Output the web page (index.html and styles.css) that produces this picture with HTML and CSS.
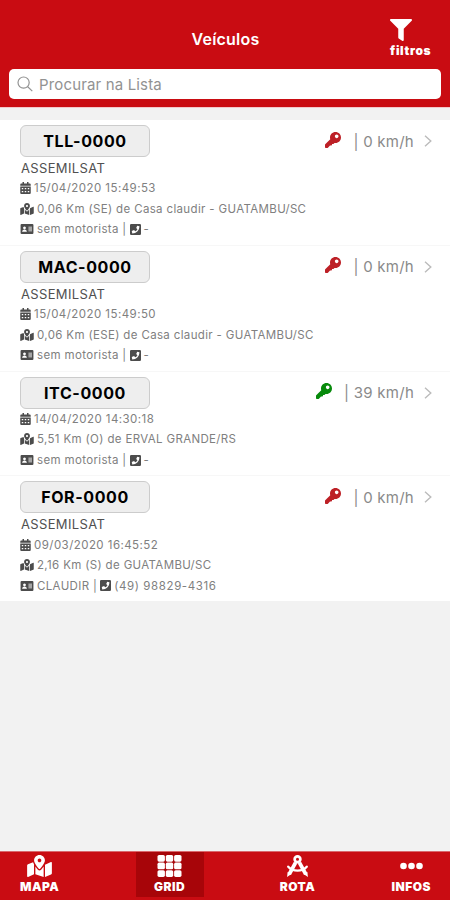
FILE: index.html
```html
<!DOCTYPE html>
<html lang="pt-br">
<head>
	<meta charset="UTF-8">
	<title>Veículos</title>
	<link rel="stylesheet" href="styles.css">
</head>
<body>
	<!-- icons -->
	<svg class="sprite" width="0" height="0">
		<symbol id="filter" viewBox="0 0 512 512"><path d="M487.976 0H24.028C2.71 0-8.047 25.866 7.058 40.971L192 225.941V432c0 7.831 3.821 15.17 10.237 19.662l80 55.98C298.02 518.69 320 507.493 320 487.98V225.941l184.947-184.97C520.021 25.896 509.338 0 487.976 0z"/></symbol>
		<symbol id="key" viewBox="0 0 512 512"><path d="M512 176.001C512 273.203 433.202 352 336 352c-11.22 0-22.19-1.062-32.827-3.069l-24.012 27.014A23.999 23.999 0 0 1 261.223 384H224v20c0 13.255-10.745 24-24 24h-40l-52 60c-8 10-16 24-30 24H24c-13.255 0-24-10.745-24-24v-78.059c0-6.365 2.529-12.47 7.029-16.971l161.802-161.802C163.108 213.814 160 195.271 160 176 160 78.798 238.797.001 335.999 0 433.488-.001 512 78.511 512 176.001zM316 138c0 32 26 58 58 58s58-26 58-58-26-58-58-58-58 26-58 58z"/></symbol>
		<symbol id="map" viewBox="0 0 576 512"><path d="M288 0c-69.59 0-126 56.41-126 126 0 56.26 82.35 158.8 113.9 196.02 6.39 7.54 17.82 7.54 24.2 0C331.65 284.8 414 182.26 414 126 414 56.41 357.59 0 288 0zm0 168c-23.2 0-42-18.8-42-42s18.8-42 42-42 42 18.8 42 42-18.8 42-42 42zM20.12 215.95A32.006 32.006 0 0 0 0 245.66v250.32c0 11.32 11.43 19.06 21.94 14.86L160 448V214.92c-8.84-15.98-16.07-31.54-21.25-46.42L20.12 215.95zM288 359.67c-14.07 0-27.38-6.18-36.51-16.96-19.66-23.2-40.57-49.62-59.49-76.72v182l192 64V266c-18.92 27.09-39.82 53.52-59.49 76.72-9.13 10.77-22.44 16.95-36.51 16.95zm266.06-198.51L416 224v288l139.88-55.95A31.996 31.996 0 0 0 576 426.34V176.02c0-11.32-11.43-19.06-21.94-14.86z"/></symbol>
		<symbol id="calendar" viewBox="0 0 448 512"><path fill-rule="evenodd" d="M0 192v272a48 48 0 0 0 48 48h352a48 48 0 0 0 48-48V192zM64 256h64v56H64zM192 256h64v56h-64zM320 256h64v56h-64zM64 384h64v56H64zM192 384h64v56h-64zM320 384h64v56h-64zM448 160v-48a48 48 0 0 0-48-48h-48V0h-64v64H160V0H96v64H48a48 48 0 0 0-48 48v48z"/></symbol>
		<symbol id="card" viewBox="0 0 576 448"><path fill-rule="evenodd" d="M48 0h480a48 48 0 0 1 48 48v352a48 48 0 0 1-48 48H48a48 48 0 0 1-48-48V48A48 48 0 0 1 48 0zM176 110a64 64 0 1 0 .1 0zM70 350h212c0-62-38-108-106-108S70 288 70 350zM352 120h160v40H352zM352 205h160v40H352zM352 290h160v40H352z"/></symbol>
		<symbol id="phone" viewBox="0 0 448 448"><path fill-rule="evenodd" d="M400 0H48A48 48 0 0 0 0 48v352a48 48 0 0 0 48 48h352a48 48 0 0 0 48-48V48a48 48 0 0 0-48-48zM94 384l-22-94 94-42 44 52c48-24 76-56 94-90l-52-44 42-98 90 24c0 170-130 292-290 292z"/></symbol>
		<symbol id="grid" viewBox="0 0 24 22">
			<rect x="0" y="0" width="7.4" height="6.7" rx="1.6"/><rect x="8.3" y="0" width="7.4" height="6.7" rx="1.6"/><rect x="16.6" y="0" width="7.4" height="6.7" rx="1.6"/>
			<rect x="0" y="7.6" width="7.4" height="6.7" rx="1.6"/><rect x="8.3" y="7.6" width="7.4" height="6.7" rx="1.6"/><rect x="16.6" y="7.6" width="7.4" height="6.7" rx="1.6"/>
			<rect x="0" y="15.2" width="7.4" height="6.7" rx="1.6"/><rect x="8.3" y="15.2" width="7.4" height="6.7" rx="1.6"/><rect x="16.6" y="15.2" width="7.4" height="6.7" rx="1.6"/>
		</symbol>
		<symbol id="compass" viewBox="0 0 24 23"><g fill="none" stroke="currentColor"><circle cx="12" cy="4.5" r="3" stroke-width="2.8"/><path stroke-width="4" d="M10 8L3.4 20M14 8l6.6 12"/><path stroke-width="2.4" stroke-linecap="round" d="M2.3 12.2c5 5.5 14.4 5.5 19.4 0"/></g><path d="M1.7 17.7l4 2.2-4.6 3zM22.3 17.7l-4 2.2 4.6 3z"/></symbol>
		<symbol id="dots" viewBox="0 0 24 22"><circle cx="4" cy="11" r="3.3"/><circle cx="12" cy="11" r="3.3"/><circle cx="20" cy="11" r="3.3"/></symbol>
		<symbol id="arrow" viewBox="0 0 8 12"><path fill="none" stroke="currentColor" stroke-width="1.4" d="M1 .8L6.8 6 1 11.2"/></symbol>
	</svg>

	<div class="app">
		<div class="header">
			<div class="topbar">
				<h1>Veículos</h1>
				<div class="filtros">
					<svg><use href="#filter"/></svg>
					<span>filtros</span>
				</div>
			</div>
			<div class="search">
				<svg viewBox="0 0 16 16"><circle cx="6.6" cy="6.6" r="5.6"/><path d="M10.7 10.7l4.6 4.4"/></svg>
				<span>Procurar na Lista</span>
			</div>
		</div>

		<div class="list">
			<div class="item">
				<div class="row">
					<div class="placa">TLL-0000</div>
					<svg class="key off"><use href="#key"/></svg>
					<span class="speed">| 0 km/h</span>
					<svg class="arrow"><use href="#arrow"/></svg>
				</div>
				<div class="name">ASSEMILSAT</div>
				<div class="line"><svg class="cal"><use href="#calendar"/></svg><span class="date">15/04/2020 15:49:53</span></div>
				<div class="line"><svg class="map"><use href="#map"/></svg><span>0,06 Km (SE) de Casa claudir - GUATAMBU/SC</span></div>
				<div class="line"><svg class="card"><use href="#card"/></svg><span>sem motorista |</span><svg class="phone"><use href="#phone"/></svg><span>-</span></div>
			</div>

			<div class="item">
				<div class="row">
					<div class="placa">MAC-0000</div>
					<svg class="key off"><use href="#key"/></svg>
					<span class="speed">| 0 km/h</span>
					<svg class="arrow"><use href="#arrow"/></svg>
				</div>
				<div class="name">ASSEMILSAT</div>
				<div class="line"><svg class="cal"><use href="#calendar"/></svg><span class="date">15/04/2020 15:49:50</span></div>
				<div class="line"><svg class="map"><use href="#map"/></svg><span>0,06 Km (ESE) de Casa claudir - GUATAMBU/SC</span></div>
				<div class="line"><svg class="card"><use href="#card"/></svg><span>sem motorista |</span><svg class="phone"><use href="#phone"/></svg><span>-</span></div>
			</div>

			<div class="item short">
				<div class="row">
					<div class="placa">ITC-0000</div>
					<svg class="key on"><use href="#key"/></svg>
					<span class="speed">| 39 km/h</span>
					<svg class="arrow"><use href="#arrow"/></svg>
				</div>
				<div class="line"><svg class="cal"><use href="#calendar"/></svg><span class="date">14/04/2020 14:30:18</span></div>
				<div class="line"><svg class="map"><use href="#map"/></svg><span>5,51 Km (O) de ERVAL GRANDE/RS</span></div>
				<div class="line"><svg class="card"><use href="#card"/></svg><span>sem motorista |</span><svg class="phone"><use href="#phone"/></svg><span>-</span></div>
			</div>

			<div class="item">
				<div class="row">
					<div class="placa">FOR-0000</div>
					<svg class="key off"><use href="#key"/></svg>
					<span class="speed">| 0 km/h</span>
					<svg class="arrow"><use href="#arrow"/></svg>
				</div>
				<div class="name">ASSEMILSAT</div>
				<div class="line"><svg class="cal"><use href="#calendar"/></svg><span class="date">09/03/2020 16:45:52</span></div>
				<div class="line"><svg class="map"><use href="#map"/></svg><span>2,16 Km (S) de GUATAMBU/SC</span></div>
				<div class="line"><svg class="card"><use href="#card"/></svg><span>CLAUDIR |</span><svg class="phone"><use href="#phone"/></svg><span class="tel">(49) 98829-4316</span></div>
			</div>
		</div>

		<div class="tabs">
			<div class="tab"><svg><use href="#map"/></svg><span>MAPA</span></div>
			<div class="tab active"><svg><use href="#grid"/></svg><span>GRID</span></div>
			<div class="tab"><svg><use href="#compass"/></svg><span>ROTA</span></div>
			<div class="tab"><svg><use href="#dots"/></svg><span>INFOS</span></div>
		</div>
	</div>
</body>
</html>
```
FILE: styles.css
```css
*{
	margin: 0;
	padding: 0;
	box-sizing: border-box;
}
body{
	font-family: Inter, "Liberation Sans", sans-serif;
	background: #f2f2f2;
}
svg{
	display: block;
	flex: none;
	fill: currentColor;
}
.sprite{
	position: absolute;
}
.app{
	height: 900px;
	display: flex;
	flex-direction: column;
}
.header{
	height: 108px;
	background: #c90c12;
	border-bottom: 1px solid #f3c9cb;
	padding: 0 9px;
	color: #fff;
}
.topbar{
	height: 69px;
	padding: 19px 10px 0 11px;
	display: grid;
	grid-template-columns: 1fr auto 1fr;
}
.topbar h1{
	grid-column: 2;
	font-size: 16px;
	line-height: 40px;
	font-weight: 600;
	letter-spacing: 0.2px;
}
.filtros{
	justify-self: end;
	width: 41px;
}
.filtros svg{
	width: 22px;
	height: 22px;
}
.filtros span{
	display: block;
	font-size: 12px;
	line-height: 14px;
	margin-top: 3px;
	font-weight: 900;
	letter-spacing: 0.65px;
}
.search{
	height: 30px;
	background: #fff;
	border-radius: 5px;
	display: flex;
	align-items: center;
	gap: 6px;
	padding-left: 8px;
	color: #929292;
	font-size: 15px;
	letter-spacing: 0.15px;
}
.search svg{
	width: 16px;
	height: 16px;
	fill: none;
	stroke: #929292;
	stroke-width: 1.2;
}
.list{
	margin-top: 12px;
	background: #fff;
}
.item{
	padding: 5px 18px 5px 20px;
	border-bottom: 1px solid #f7f7f7;
}
.item:last-child{
	border-bottom: 0;
}
.row{
	display: flex;
	align-items: center;
	color: #8a8a8a;
}
.placa{
	width: 130px;
	height: 32px;
	line-height: 31px;
	text-align: center;
	color: #000;
	font-size: 16px;
	font-weight: 700;
	letter-spacing: 0.6px;
	background: #eee;
	border: 1px solid #ccc;
	border-radius: 6px;
	margin-right: auto;
}
.key{
	width: 16px;
	height: 16px;
	margin: 0 12px 3px 0;
}
.off{
	color: #bd2026;
}
.on{
	color: #078a0b;
}
.speed{
	font-size: 15px;
	letter-spacing: 0.25px;
}
.arrow{
	width: 8px;
	height: 12px;
	margin-left: 10px;
	color: #bbb;
}
.name{
	height: 21px;
	line-height: 23px;
	font-size: 13px;
	letter-spacing: 0.35px;
	color: #505050;
	padding-left: 1px;
}
.line{
	height: 20.6px;
	display: flex;
	align-items: center;
	gap: 3px;
	font-size: 11.5px;
	letter-spacing: 0.35px;
	color: #808080;
}
.date{
	letter-spacing: 0.45px;
}
.tel{
	letter-spacing: 0.6px;
}
.line svg{
	color: #4c4c4c;
}
.cal{
	width: 11px;
	height: 12px;
}
.map{
	width: 14px;
	height: 12px;
}
.card{
	width: 14px;
	height: 10px;
}
.phone{
	width: 11px;
	height: 11px;
}
.tabs{
	margin-top: auto;
	height: 49px;
	background: #c90c12;
	border-top: 1px solid #d9686c;
	padding: 0 19px 0 20px;
	display: flex;
	justify-content: space-between;
	align-items: flex-start;
	color: #fff;
}
.tab{
	height: 45px;
	padding-top: 3px;
	display: flex;
	flex-direction: column;
	align-items: center;
	font-size: 12px;
	line-height: 15px;
	font-weight: 900;
	letter-spacing: 0.5px;
}
.tab svg{
	width: 25px;
	height: 22px;
	margin-bottom: 2px;
}
.active{
	width: 68px;
	background: #a70509;
}
```
